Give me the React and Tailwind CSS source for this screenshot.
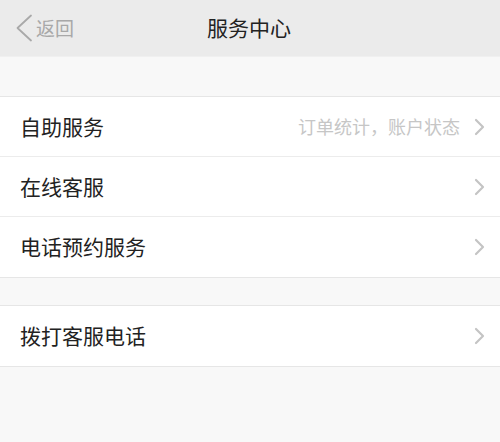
const font = { fontFamily: '"Noto Sans CJK SC", "Noto Sans", sans-serif' };

function Chevron() {
  return (
    <svg width="11" height="18" viewBox="0 0 11 18" className="shrink-0">
      <path d="M2 2 L9 9 L2 16" fill="none" stroke="#c4c4c4" strokeWidth="2.2" strokeLinecap="round" strokeLinejoin="round" />
    </svg>
  );
}

function BackArrow() {
  return (
    <svg width="18" height="28" viewBox="0 0 18 28" className="shrink-0">
      <path d="M16 1.5 L2.5 14 L16 26.5" fill="none" stroke="#a9a9a9" strokeWidth="1.8" strokeLinecap="round" strokeLinejoin="round" />
    </svg>
  );
}

function Row({ label, hint, last }) {
  return (
    <div className={`flex items-center h-[60px] pl-5 pr-[15px] bg-white ${last ? "" : "border-b border-[#ececec]"}`}>
      <span className="flex-1 text-[21px] text-[#222]">{label}</span>
      {hint && <span className="text-[18px] text-[#c6c6c6] mr-[14px]">{hint}</span>}
      <Chevron />
    </div>
  );
}

export default function App() {
  const group1 = [
    { label: "自助服务", hint: "订单统计，账户状态" },
    { label: "在线客服" },
    { label: "电话预约服务" },
  ];

  return (
    <div className="w-[500px] h-[442px] bg-[#f8f8f8] flex flex-col" style={font}>
      {/* Header */}
      <header className="h-[57px] bg-[#ebebeb] flex items-center relative border-b border-[#f0f0f0]">
        <div className="flex items-center pl-[15px] gap-[3px] text-[#a8a8a8]">
          <BackArrow />
          <span className="text-[19px]">返回</span>
        </div>
        <h1 className="absolute left-[207px] text-[21px] text-[#222]">服务中心</h1>
      </header>

      <div className="h-[39px]" />

      <div className="border-t border-b border-[#e6e6e6]">
        {group1.map((r, i) => (
          <Row key={r.label} label={r.label} hint={r.hint} last={i === group1.length - 1} />
        ))}
      </div>

      <div className="h-[27px]" />

      <div className="border-t border-b border-[#e6e6e6]">
        <Row label="拨打客服电话" last />
      </div>
    </div>
  );
}
